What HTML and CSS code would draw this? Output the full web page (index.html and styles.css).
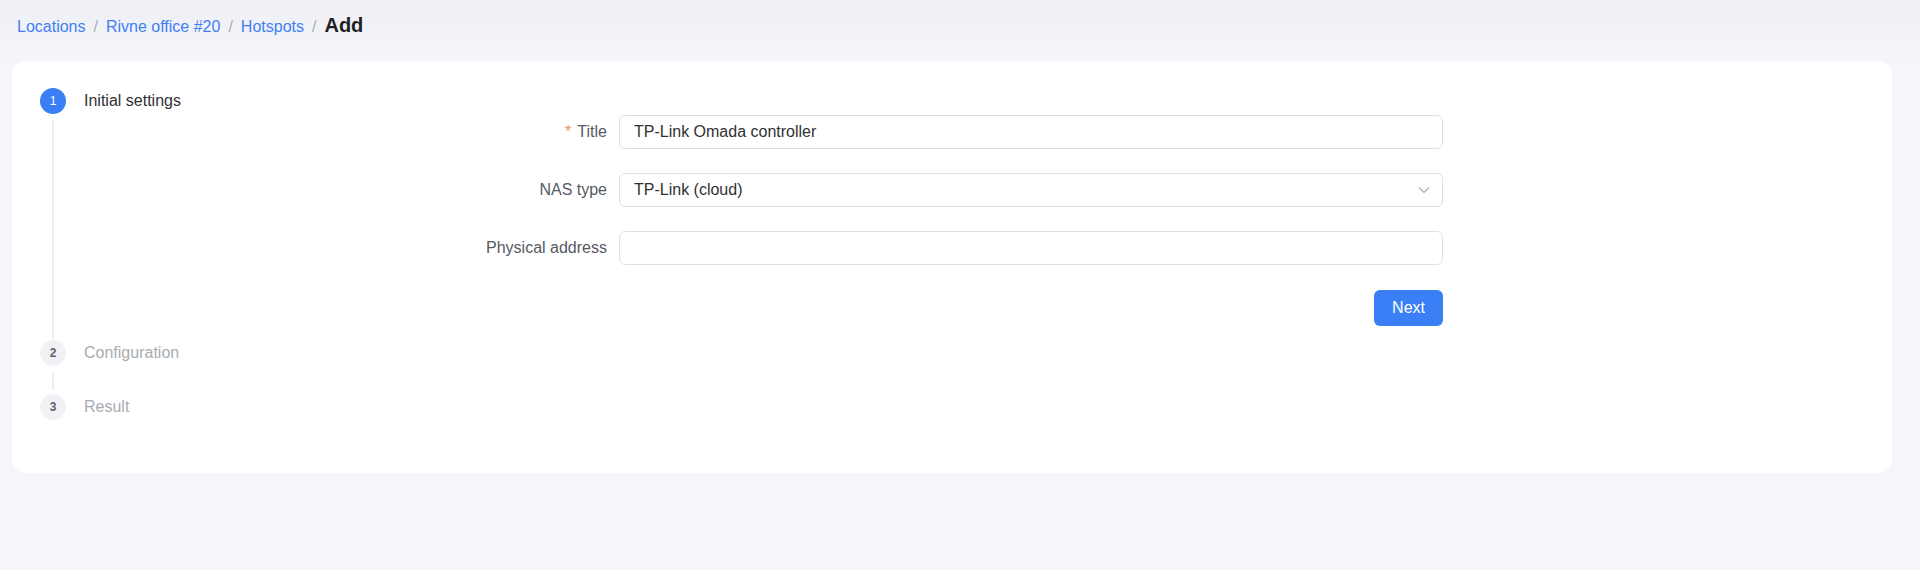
FILE: index.html
```html
<!DOCTYPE html>
<html lang="en">
<head>
    <meta charset="UTF-8">
    <meta name="viewport" content="width=device-width, initial-scale=1.0">
    <title>Add hotspot</title>
    <link rel="stylesheet" href="styles.css">
</head>
<body>
    <header class="topbar">
        <nav class="breadcrumb">
            <a href="#">Locations</a>
            <span class="sep">/</span>
            <a href="#">Rivne office #20</a>
            <span class="sep">/</span>
            <a href="#">Hotspots</a>
            <span class="sep">/</span>
            <span class="current">Add</span>
        </nav>
    </header>

    <main class="card">
        <div class="steps">
            <!-- step 1 -->
            <div class="step active">
                <div class="step-head">
                    <span class="step-num">1</span>
                    <span class="step-line"></span>
                </div>
                <div class="step-body">
                    <div class="step-title">Initial settings</div>

                    <form class="form" onsubmit="return false">
                        <label class="form-label" for="title"><span class="req">*</span> Title</label>
                        <input class="form-input" id="title" type="text" value="TP-Link Omada controller">

                        <label class="form-label" for="nas">NAS type</label>
                        <div class="form-select" id="nas">
                            <span>TP-Link (cloud)</span>
                            <svg class="chevron" width="14" height="14" viewBox="0 0 14 14">
                                <path d="M2 4.5 L7 9.5 L12 4.5" fill="none" stroke="#a8abb2" stroke-width="1.1"/>
                            </svg>
                        </div>

                        <label class="form-label" for="address">Physical address</label>
                        <input class="form-input" id="address" type="text">

                        <div class="form-actions">
                            <button class="btn-primary" type="submit">Next</button>
                        </div>
                    </form>
                </div>
            </div>

            <!-- step 2 -->
            <div class="step">
                <div class="step-head">
                    <span class="step-num">2</span>
                    <span class="step-line"></span>
                </div>
                <div class="step-body">
                    <div class="step-title">Configuration</div>
                </div>
            </div>

            <!-- step 3 -->
            <div class="step last">
                <div class="step-head">
                    <span class="step-num">3</span>
                </div>
                <div class="step-body">
                    <div class="step-title">Result</div>
                </div>
            </div>
        </div>
    </main>
</body>
</html>
```

FILE: styles.css
```css
* {
    box-sizing: border-box;
}

html, body {
    height: 100%;
}

body {
    margin: 0;
    font-family: 'Liberation Sans', Arial, sans-serif;
    background-color: #f5f6fa;
    color: #303133;
}

.topbar {
    height: 61px;
    padding: 14px 17px 0;
    background: linear-gradient(180deg, #eef0f5 0%, #f2f3f8 60%, #f5f6fa 100%);
}

.breadcrumb {
    display: flex;
    align-items: baseline;
    font-size: 16px;
}

.breadcrumb a {
    color: #3f7ef6;
    text-decoration: none;
}

.breadcrumb .sep {
    color: #a8abb2;
    margin: 0 8px;
}

.breadcrumb .current {
    color: #1f1f1f;
    font-weight: bold;
    font-size: 20px;
}

.card {
    margin: 0 28px 0 12px;
    background-color: #fff;
    border-radius: 14px;
    padding: 27px 28px 53px;
}

.steps {
    display: flex;
    flex-direction: column;
}

.step {
    display: flex;
    gap: 18px;
}

.step-head {
    display: flex;
    flex-direction: column;
    align-items: center;
    width: 26px;
    flex-shrink: 0;
}

.step-num {
    width: 26px;
    height: 26px;
    border-radius: 50%;
    background-color: #f0f2f5;
    color: #606266;
    font-size: 12px;
    font-weight: bold;
    display: flex;
    align-items: center;
    justify-content: center;
}

.step-line {
    flex: 1;
    width: 2px;
    background-color: #eceef2;
    margin: 6px 0 4px;
}

.step.active .step-num {
    background-color: #3a7ff6;
    color: #fff;
    font-weight: normal;
}

.step.active .step-line {
    margin-bottom: 2px;
}

.step-body {
    flex: 1;
    padding-bottom: 28px;
}

.step.active .step-body {
    padding-bottom: 14px;
}

.step.last .step-body {
    padding-bottom: 0;
}

.step-title {
    line-height: 26px;
    font-size: 16px;
    color: #a8abb2;
}

.step.active .step-title {
    color: #303133;
}

.form {
    display: grid;
    grid-template-columns: 180px 824px;
    column-gap: 12px;
    row-gap: 24px;
    align-items: center;
    margin: 1px 0 0 343px;
}

.form-label {
    text-align: right;
    font-size: 16px;
    color: #555a62;
}

.req {
    color: #f08c73;
    margin-right: 2px;
}

.form-input,
.form-select {
    height: 34px;
    border: 1px solid #dcdfe6;
    border-radius: 6px;
    padding: 0 14px;
    font-family: inherit;
    font-size: 16px;
    color: #303133;
    background: #fff;
    outline: none;
}

.form-select {
    display: flex;
    align-items: center;
    justify-content: space-between;
    padding-right: 11px;
}

.chevron {
    display: block;
}

.form-actions {
    grid-column: 2;
    display: flex;
    justify-content: flex-end;
    margin-top: 1px;
}

.btn-primary {
    height: 36px;
    padding: 0 18px;
    border: none;
    border-radius: 6px;
    background-color: #3a7ff6;
    color: #fff;
    font-family: inherit;
    font-size: 16px;
    cursor: pointer;
}
```
